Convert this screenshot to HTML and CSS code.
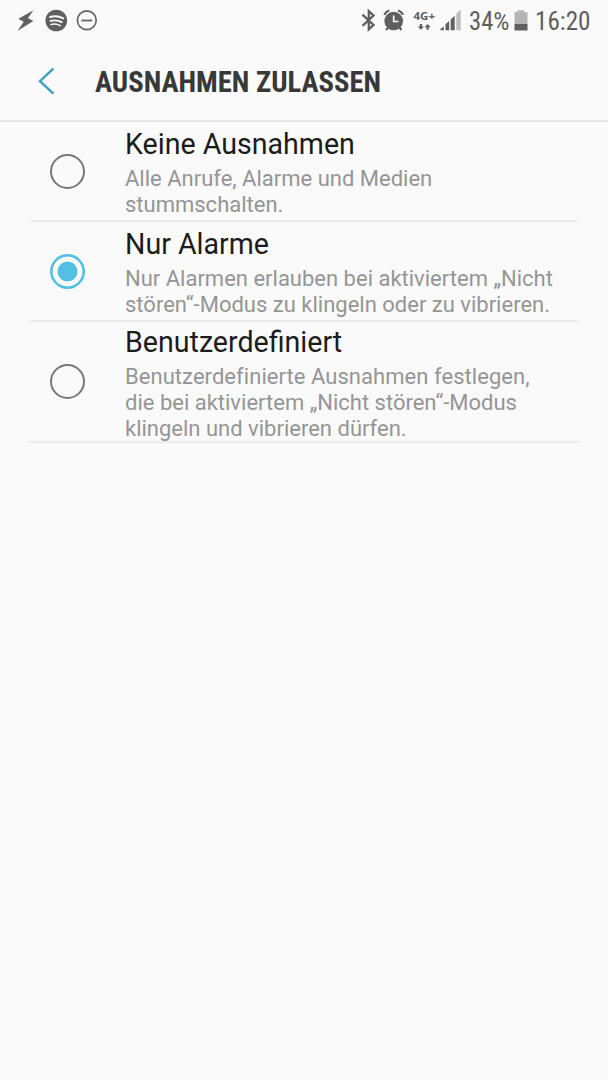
FILE: index.html
```html
<!DOCTYPE html>
<html lang="de">
<head>
<meta charset="utf-8">
<title>Ausnahmen zulassen</title>
<link rel="stylesheet" href="styles.css">
</head>
<body>
<div class="status">
  <svg class="status-left" width="120" height="42" viewBox="0 0 120 42">
    <path fill="#5f5f5f" stroke="#5f5f5f" stroke-width=".5" d="M32.700 11 18.800 18.800l5.200 3L18.200 30.200l14.700-9.200-5.300-2.800z"/>
    <circle cx="56.300" cy="20.500" r="10.800" fill="#5f5f5f"/>
    <g fill="none" stroke="#fafafa" stroke-linecap="round">
      <path stroke-width="2" d="M50 17q7-2 13.200 1.300"/>
      <path stroke-width="1.800" d="M50.500 20.900q6-1.600 11.300 1.200"/>
      <path stroke-width="1.500" d="M51 24.500q5-1.300 9.300 1.100"/>
    </g>
    <circle cx="86.800" cy="20.300" r="9.400" fill="none" stroke="#656565" stroke-width="1.700"/>
    <path stroke="#656565" stroke-width="1.800" d="M81.300 20.500h11"/>
  </svg>
  <svg class="status-right" width="258" height="42" viewBox="350 0 258 42">
    <path fill="none" stroke="#5f5f5f" stroke-width="2.300" d="m362.500 14.700 11 10.300-4.700 4.300V11.200l4.700 4.300-11 10.300"/>
    <circle cx="393.700" cy="21" r="9.300" fill="#5f5f5f"/>
    <path fill="none" stroke="#5f5f5f" stroke-width="2.300" d="M384.300 14.700q1.500-3.200 5-4.200M403 14.700q-1.500-3.200-5-4.200M388.500 27l-2.500 3M399 27l2.500 3"/>
    <path fill="none" stroke="#fafafa" stroke-width="1.700" d="M393.700 15.500v6h4.800"/>
    <text class="network" x="413.500" y="19.500" textLength="21.500" lengthAdjust="spacingAndGlyphs">4G+</text>
    <path fill="#5f5f5f" d="M419.800 24h2.200v2.500h2l-3.100 3.300-3.100-3.300h2zM426.500 29.800h2.200v-2.500h2l-3.100-3.300-3.100 3.300h2z"/>
    <path fill="#5f5f5f" d="M440.500 30.300v-1.500l3.300-2.300v3.800zM445.500 30.300v-6l3.700-3.300v9.300zM450.700 30.300V19.500l4-3.800v14.600z"/>
    <path fill="#bdbdbd" d="M456.300 30.300V13.500l4.400-4v20.800z"/>
    <text class="status-text" x="469" y="30" textLength="40.500" lengthAdjust="spacingAndGlyphs">34<tspan class="percent">%</tspan></text>
    <path fill="#b5b5b5" d="M514.500 12h3v-1.800h6.500V12h3.500v12h-13z"/>
    <path fill="#5f5f5f" d="M514.500 24h13v6.500h-13z"/>
    <text class="status-text" x="535" y="30" textLength="55.500" lengthAdjust="spacingAndGlyphs">16:20</text>
  </svg>
</div>
<header class="bar">
  <svg width="400" height="78" viewBox="0 42 400 78">
    <path fill="none" stroke="#459fc2" stroke-width="2.500" d="M53.300 68.700 40 81.200l13.300 12.500"/>
    <text class="bar-title" x="95" y="92.300" textLength="286" lengthAdjust="spacingAndGlyphs">AUSNAHMEN ZULASSEN</text>
  </svg>
</header>
<main class="list">
  <div class="item">
    <span class="radio"></span>
    <div class="text"><div class="name">Keine Ausnahmen</div>
    <div class="desc">Alle Anrufe, Alarme und Medien<br>stummschalten.</div></div>
  </div>
  <div class="item">
    <span class="radio radio-on"></span>
    <div class="text"><div class="name">Nur Alarme</div>
    <div class="desc">Nur Alarmen erlauben bei aktiviertem „Nicht<br>stören“-Modus zu klingeln oder zu vibrieren.</div></div>
  </div>
  <div class="item item-tall">
    <span class="radio"></span>
    <div class="text"><div class="name">Benutzerdefiniert</div>
    <div class="desc"><span class="desc-wide">Benutzerdefinierte Ausnahmen festlegen,</span><br>die bei aktiviertem „Nicht stören“-Modus<br>klingeln und vibrieren dürfen.</div></div>
  </div>
</main>
</body>
</html>
```
FILE: styles.css
```css
* { box-sizing: border-box; }
body {
  margin: 0;
  min-height: 1080px;
  background: #fafafa;
  font-family: Roboto, "Liberation Sans", sans-serif;
}
svg { display: block; }
.status { display: flex; justify-content: space-between; height: 42px; }
.network { font: bold 11px "Open Sans", sans-serif; fill: #5f5f5f; }
.status-text { font: 25.500px "Roboto Condensed", Roboto, sans-serif; fill: #5f5f5f; }
.percent { font-size: 26.500px; }
.bar { height: 80px; border-bottom: 2px solid #e6e6e6; }
.bar-title { font: bold 29px "Roboto Condensed", Roboto, sans-serif; fill: #383838; }
.list { padding: 0 30px; }
.item {
  display: flex;
  align-items: center;
  gap: 40px;
  height: 100px;
  padding-left: 20px;
  border-bottom: 2px solid #ebebeb;
}
.item-tall { height: 121px; }
.radio {
  flex: none;
  width: 35px;
  height: 35px;
  border: 2px solid #777;
  border-radius: 50%;
}
.radio-on {
  border: 0;
  background: radial-gradient(circle closest-side, #52bfe5 9.500px, transparent 10.300px 14.500px, #52bfe5 15.300px);
}
.item-tall .radio { margin-bottom: 1px; }
.text { padding-top: 4px; white-space: nowrap; }
.item-tall .text { padding-top: 5px; }
.name { font-size: 28.600px; line-height: 32px; color: #1c1c1c; }
.desc { padding-top: 6px; font-size: 22px; line-height: 25.800px; color: #959595; }
.desc-wide { letter-spacing: 0.050px; }
```
